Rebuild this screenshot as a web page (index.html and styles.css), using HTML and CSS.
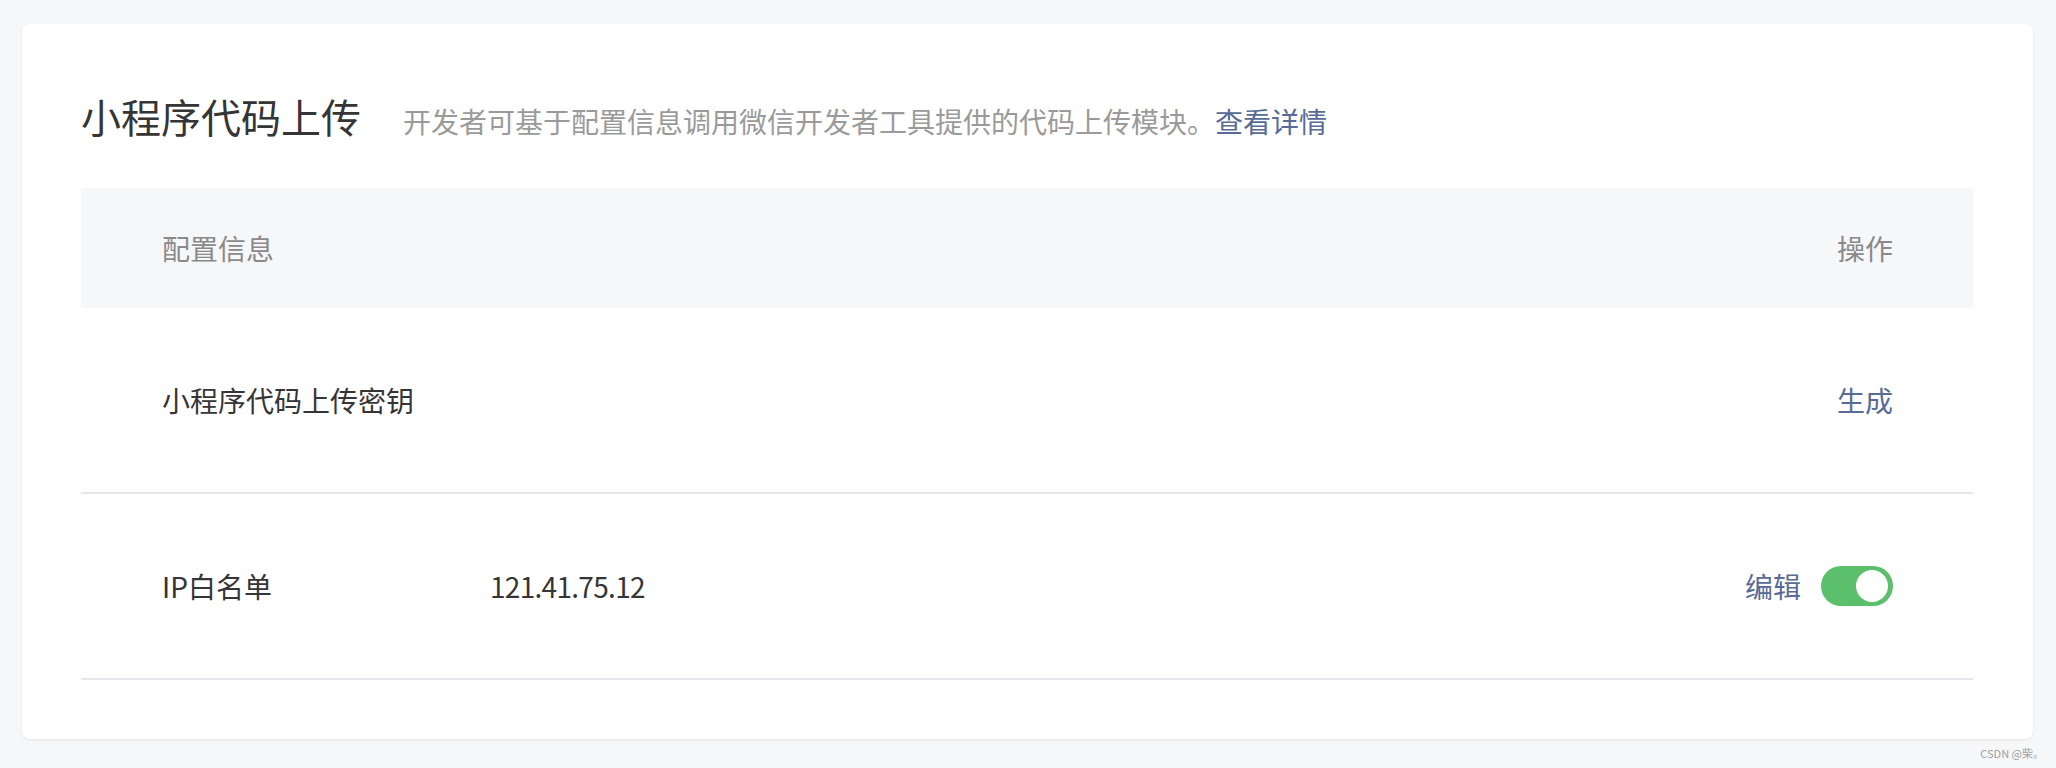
FILE: index.html
```html
<!DOCTYPE html>
<html lang="zh-CN">
<head>
<meta charset="utf-8">
<title>小程序代码上传</title>
<link rel="stylesheet" href="styles.css">
</head>
<body>
<div class="page">
  <section class="card">
    <div class="card-head">
      <h2 class="title">小程序代码上传</h2>
      <p class="desc">开发者可基于配置信息调用微信开发者工具提供的代码上传模块。<a class="link" href="#">查看详情</a></p>
    </div>
    <div class="table">
      <div class="row row-head">
        <div class="cell">配置信息</div>
        <div class="cell"></div>
        <div class="cell cell-op">操作</div>
      </div>
      <div class="row">
        <div class="cell">小程序代码上传密钥</div>
        <div class="cell"></div>
        <div class="cell cell-op"><a class="link" href="#">生成</a></div>
      </div>
      <div class="row">
        <div class="cell">IP白名单</div>
        <div class="cell cell-value">121.41.75.12</div>
        <div class="cell cell-op">
          <a class="link" href="#">编辑</a>
          <span class="switch"><span class="knob"></span></span>
        </div>
      </div>
    </div>
  </section>
  <div class="watermark">CSDN @柴。</div>
</div>
</body>
</html>
```

FILE: styles.css
```css
* {
  box-sizing: border-box;
}

html, body {
  margin: 0;
  padding: 0;
  background: #f6f7f9;
}

body {
  font-family: "Noto Sans CJK SC", "Noto Sans", sans-serif;
  color: #353535;
}

.page {
  position: relative;
  width: 2056px;
  height: 768px;
  padding: 24px 23px 29px 22px;
}

.card {
  background: #ffffff;
  border-radius: 8px;
  box-shadow: 0 1px 3px rgba(0, 0, 0, 0.08);
  height: 715px;
  padding: 62px 60px 0 59px;
}

.card-head {
  display: flex;
  align-items: baseline;
  height: 60px;
  margin-bottom: 42px;
}

.title {
  margin: 0;
  font-size: 40px;
  font-weight: 400;
  line-height: 60px;
  color: #353535;
}

.desc {
  margin: 0 0 0 42px;
  font-size: 28px;
  line-height: 40px;
  color: #9a9a9a;
}

.link {
  color: #576b95;
  text-decoration: none;
}

.table {
  display: flex;
  flex-direction: column;
}

.row {
  display: grid;
  grid-template-columns: 328px 1fr auto;
  align-items: center;
  padding: 0 80px 0 81px;
  height: 186px;
  border-bottom: 2px solid #e7e7eb;
  font-size: 28px;
  line-height: 40px;
}

.row-head {
  height: 120px;
  background: #f6f7f9;
  border-bottom: none;
  color: #8a8a8a;
}

.cell-value {
  letter-spacing: -0.7px;
}

.cell-op {
  display: flex;
  align-items: center;
  justify-content: flex-end;
  gap: 20px;
}

.switch {
  position: relative;
  display: inline-block;
  width: 72px;
  height: 40px;
  border-radius: 20px;
  background: #5bbf6c;
}

.knob {
  position: absolute;
  top: 4px;
  right: 5px;
  width: 32px;
  height: 32px;
  border-radius: 50%;
  background: #ffffff;
}

.watermark {
  position: absolute;
  right: 12px;
  bottom: 7px;
  font-size: 11px;
  line-height: 16px;
  color: #a0a0a0;
}
```
